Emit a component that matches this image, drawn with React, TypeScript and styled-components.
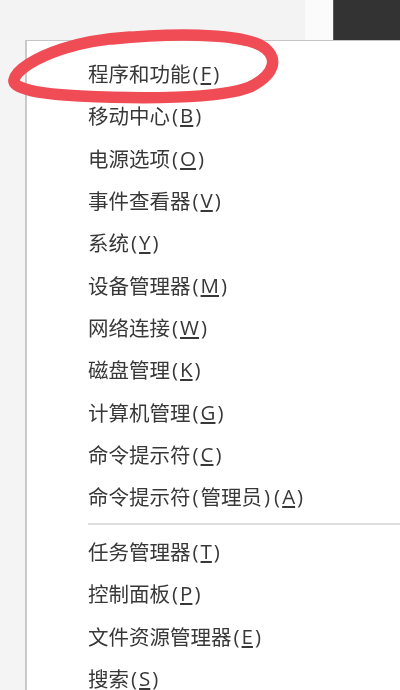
import React from "react";
import styled, { createGlobalStyle } from "styled-components";

const Global = createGlobalStyle`
  html, body { margin: 0; padding: 0; background: #f3f3f3; }
  #root { width: 400px; height: 690px; }
`;

const Page = styled.div`
  position: relative;
  width: 400px;
  height: 690px;
  overflow: hidden;
  background: #f3f3f3;
  display: flex;
  flex-direction: column;
  font-family: "Open Sans", "Noto Sans CJK SC", sans-serif;
`;

const TopBar = styled.div`
  height: 40px;
  display: flex;
  flex-shrink: 0;
`;

const TopFill = styled.div`
  flex: 1;
  background: #f3f3f3;
`;

const TopStrip = styled.div`
  width: 28px;
  background: #fbfbfb;
`;

const DarkBlock = styled.div`
  width: 67px;
  background: #333333;
  border-left: 1px solid #5a5a5a;
  box-sizing: border-box;
`;

const Body = styled.div`
  flex: 1;
  display: flex;
`;

const Gutter = styled.div`
  width: 25px;
  background: #f4f4f4;
  flex-shrink: 0;
`;

const Menu = styled.div`
  flex: 1;
  background: #ffffff;
  border-left: 2px solid #c9c9c9;
  border-top: 1px solid #c6c6c6;
  padding-top: 11px;
  padding-left: 61px;
  display: flex;
  flex-direction: column;
`;

const Item = styled.div`
  height: 42.3px;
  display: flex;
  align-items: center;
  font-size: 20.5px;
  color: #383838;
  white-space: nowrap;
  filter: blur(0.45px);
`;

const Paren = styled.span`
  margin: 0 2px;
`;

const Key = styled.span`
  text-decoration: underline;
  text-decoration-thickness: 1.5px;
  text-underline-offset: 2px;
`;

const Separator = styled.div`
  height: 12.7px;
  display: flex;
  align-items: center;
  &::after {
    content: "";
    flex: 1;
    height: 2px;
    background: #dedede;
  }
`;

const Marker = styled.svg`
  position: absolute;
  left: 0;
  top: 0;
  pointer-events: none;
  filter: blur(0.4px);
`;

type Entry = { label: string; key: string } | { sep: true };

const entries: Entry[] = [
  { label: "程序和功能", key: "F" },
  { label: "移动中心", key: "B" },
  { label: "电源选项", key: "O" },
  { label: "事件查看器", key: "V" },
  { label: "系统", key: "Y" },
  { label: "设备管理器", key: "M" },
  { label: "网络连接", key: "W" },
  { label: "磁盘管理", key: "K" },
  { label: "计算机管理", key: "G" },
  { label: "命令提示符", key: "C" },
  { label: "命令提示符(管理员)", key: "A" },
  { sep: true },
  { label: "任务管理器", key: "T" },
  { label: "控制面板", key: "P" },
  { label: "文件资源管理器", key: "E" },
  { label: "搜索", key: "S" },
];

function renderText(text: string) {
  return text.split(/([()])/).map((part, i) =>
    part === "(" || part === ")" ? <Paren key={i}>{part}</Paren> : part
  );
}

export default function App() {
  return (
    <>
      <Global />
      <Page>
        <TopBar>
          <TopFill />
          <TopStrip />
          <DarkBlock />
        </TopBar>
        <Body>
          <Gutter />
          <Menu>
            {entries.map((e, i) =>
              "sep" in e ? (
                <Separator key={i} />
              ) : (
                <Item key={i}>
                  {renderText(e.label)}
                  <Paren>(</Paren>
                  <Key>{e.key}</Key>
                  <Paren>)</Paren>
                </Item>
              )
            )}
          </Menu>
        </Body>
        <Marker width="400" height="690" viewBox="0 0 400 690">
          <path
            d="M 112 39 C 170 33, 235 33, 260 45 C 280 56, 276 74, 250 87 C 220 99, 140 99, 80 96 C 40 94, 12 89, 14 80 C 16 70, 35 58, 62 49 C 80 43, 100 39, 130 37"
            fill="none"
            stroke="#f04c56"
            strokeWidth="11.5"
            strokeLinecap="round"
            strokeLinejoin="round"
          />
        </Marker>
      </Page>
    </>
  );
}
